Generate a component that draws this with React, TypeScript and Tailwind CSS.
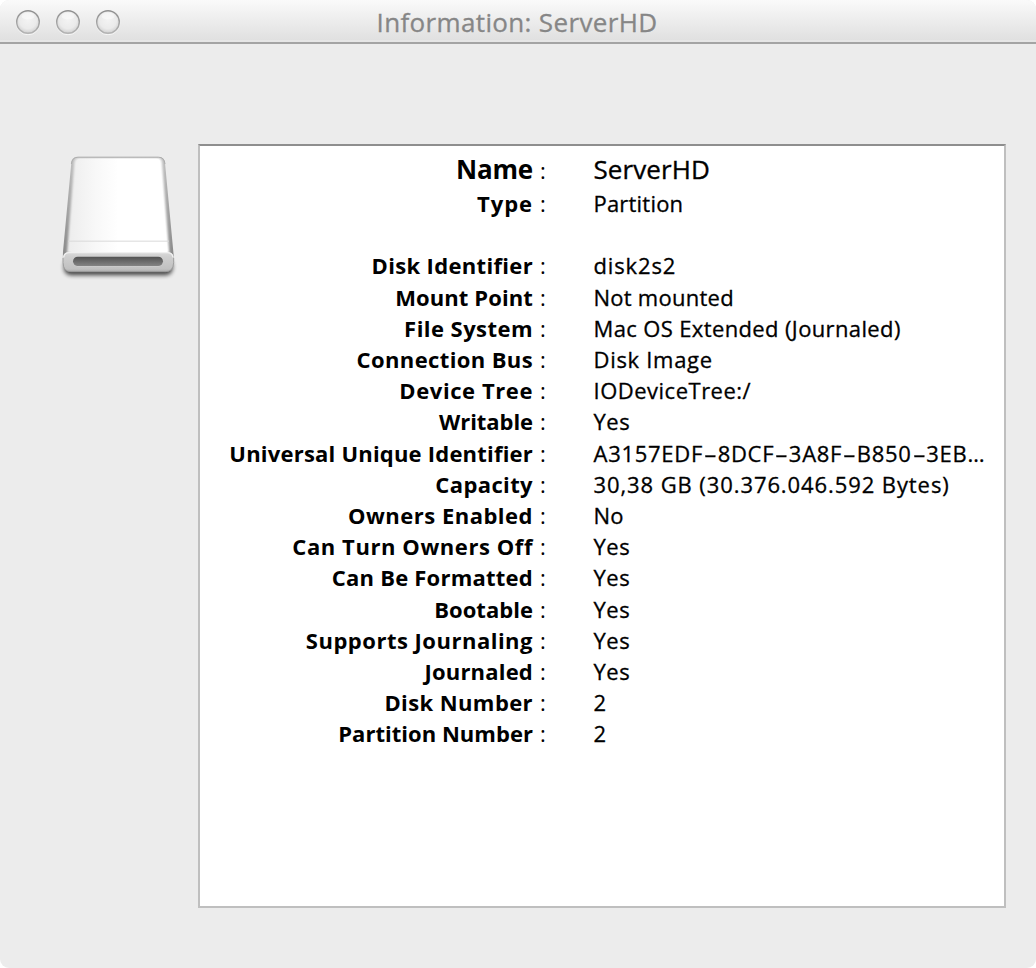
type Row = { label: string; value: string; labelCls: string; valueCls: string; h: string };

const rows: Row[] = [
  { label: "Type", value: "Partition", labelCls: "tracking-[0.94px]", valueCls: "tracking-[0.2px]", h: "h-[62px]" },
  { label: "Disk Identifier", value: "disk2s2", labelCls: "tracking-[0.33px]", valueCls: "tracking-[0.85px]", h: "h-8" },
  { label: "Mount Point", value: "Not mounted", labelCls: "tracking-[0.1px]", valueCls: "tracking-[0.25px]", h: "h-[31px]" },
  { label: "File System", value: "Mac OS Extended (Journaled)", labelCls: "tracking-[0.45px]", valueCls: "tracking-[0.37px]", h: "h-[31px]" },
  { label: "Connection Bus", value: "Disk Image", labelCls: "tracking-[0.38px]", valueCls: "tracking-[0.7px]", h: "h-[31px]" },
  { label: "Device Tree", value: "IODeviceTree:/", labelCls: "tracking-[0.58px]", valueCls: "tracking-[0.5px]", h: "h-[31px]" },
  { label: "Writable", value: "Yes", labelCls: "tracking-[-0.06px]", valueCls: "tracking-[0.5px]", h: "h-8" },
  { label: "Universal Unique Identifier", value: "A3157EDF-8DCF-3A8F-B850-3EB…", labelCls: "tracking-[0.21px]", valueCls: "tracking-[0.72px]", h: "h-[31px]" },
  { label: "Capacity", value: "30,38 GB (30.376.046.592 Bytes)", labelCls: "tracking-[0.38px]", valueCls: "tracking-[0.91px]", h: "h-[31px]" },
  { label: "Owners Enabled", value: "No", labelCls: "tracking-[0.5px]", valueCls: "tracking-[0.2px]", h: "h-[31px]" },
  { label: "Can Turn Owners Off", value: "Yes", labelCls: "tracking-[0.57px]", valueCls: "tracking-[0.5px]", h: "h-[31px]" },
  { label: "Can Be Formatted", value: "Yes", labelCls: "tracking-[0.23px]", valueCls: "tracking-[0.5px]", h: "h-8" },
  { label: "Bootable", value: "Yes", labelCls: "tracking-[0.03px]", valueCls: "tracking-[0.5px]", h: "h-[31px]" },
  { label: "Supports Journaling", value: "Yes", labelCls: "tracking-[0.5px]", valueCls: "tracking-[0.5px]", h: "h-[31px]" },
  { label: "Journaled", value: "Yes", labelCls: "tracking-[0.2px]", valueCls: "tracking-[0.5px]", h: "h-[31px]" },
  { label: "Disk Number", value: "2", labelCls: "tracking-[0.4px]", valueCls: "", h: "h-[31px]" },
  { label: "Partition Number", value: "2", labelCls: "tracking-[0.03px]", valueCls: "", h: "h-[31px]" },
];

/* Hyphens are drawn wide, in a cell of their own. */
function Value({ text }: { text: string }) {
  const parts = text.split("-");
  return (
    <>
      {parts.map((part, i) => (
        <span key={i}>
          {i > 0 && <span className="inline-block w-[14.6px] scale-x-[1.8] text-center tracking-normal">-</span>}
          {part}
        </span>
      ))}
    </>
  );
}

function WindowButton() {
  return (
    <svg className="size-[26px]" viewBox="0 0 26 26">
      <defs>
        <linearGradient id="btn-edge" x1="0" y1="0" x2="0" y2="1">
          <stop offset="0" stopColor="#909090" />
          <stop offset="1" stopColor="#b4b4b4" />
        </linearGradient>
        <radialGradient id="btn-fill" cx="0.5" cy="0.42" r="0.58">
          <stop offset="0" stopColor="#f3f3f3" />
          <stop offset="0.65" stopColor="#ebebeb" />
          <stop offset="1" stopColor="#cfcfcf" />
        </radialGradient>
      </defs>
      <circle cx="13" cy="14" r="11.8" fill="none" stroke="#f6f6f6" strokeWidth="1" />
      <circle cx="13" cy="13" r="11.3" fill="url(#btn-fill)" stroke="url(#btn-edge)" strokeWidth="1.4" />
      <ellipse cx="13" cy="7" rx="6.5" ry="3.6" fill="#fff" opacity="0.45" />
    </svg>
  );
}

function DriveIcon() {
  return (
    <svg className="h-[150px] w-[148px] shrink-0" viewBox="0 0 444 450">
      <defs>
        <linearGradient id="body" x1="40" y1="0" x2="370" y2="0" gradientUnits="userSpaceOnUse">
          <stop offset="0" stopColor="#ebebeb" />
          <stop offset="0.3" stopColor="#f8f8f8" />
          <stop offset="0.5" stopColor="#ffffff" />
          <stop offset="1" stopColor="#ffffff" />
        </linearGradient>
        <linearGradient id="side" x1="0" y1="50" x2="0" y2="345" gradientUnits="userSpaceOnUse">
          <stop offset="0" stopColor="#c0c0c0" />
          <stop offset="0.45" stopColor="#a8a8a8" />
          <stop offset="1" stopColor="#8a8a8a" />
        </linearGradient>
        <linearGradient id="front" x1="0" y1="335" x2="0" y2="396" gradientUnits="userSpaceOnUse">
          <stop offset="0" stopColor="#dcdcdc" />
          <stop offset="0.25" stopColor="#cfcfcf" />
          <stop offset="0.85" stopColor="#c1c1c1" />
          <stop offset="1" stopColor="#a8a8a8" />
        </linearGradient>
        <linearGradient id="slot" x1="0" y1="350" x2="0" y2="378" gradientUnits="userSpaceOnUse">
          <stop offset="0" stopColor="#515151" />
          <stop offset="1" stopColor="#848484" />
        </linearGradient>
        <filter id="shadow" x="-20%" y="-60%" width="140%" height="260%">
          <feGaussianBlur stdDeviation="6" />
        </filter>
        <filter id="soft" x="-5%" y="-5%" width="110%" height="110%">
          <feGaussianBlur stdDeviation="3" />
        </filter>
        <clipPath id="outline">
          <path d="M82 51H327Q343 51 345 68L371 345Q372 395 350 395H60Q38 395 38 345L64 68Q66 51 82 51Z" />
        </clipPath>
      </defs>
      <rect x="42" y="356" width="326" height="50" rx="22" fill="#000" opacity="0.7" filter="url(#shadow)" />
      <g clipPath="url(#outline)">
        <rect x="30" y="45" width="350" height="355" fill="url(#side)" />
        <path d="M86 54H324Q334 54 336 66L358 340H51L73 66Q75 54 86 54Z" fill="url(#body)" filter="url(#soft)" />
        <path d="M90 56H320Q329 56 330 66L352 338H62L80 66Q81 56 90 56Z" fill="url(#body)" />
        <path d="M54 303.5H357" stroke="#dadada" strokeWidth="3" />
      </g>
      <path d="M64 72Q66 51.500 84 51.500H325Q343 51.500 345 72" fill="none" stroke="#adadad" strokeWidth="3" />
      <path d="M39 352Q41 337 56 337H353Q369 337 371 352V368Q369 395 347 395H63Q40 395 39 368Z" fill="url(#front)" />
      <path d="M41 352Q43 338 57 338H352Q367 338 369 352" fill="none" stroke="#f0f0f0" strokeWidth="4" />
      <path d="M39 354V368Q40 395 63 395H347Q369 395 371 368V354" fill="none" stroke="#999999" strokeWidth="2.5" />
      <rect x="69" y="351" width="270" height="28" rx="14" fill="#e0e0e0" />
      <rect x="69" y="350" width="270" height="28" rx="14" fill="url(#slot)" />
    </svg>
  );
}

export default function App() {
  return (
    <div className="bg-white">
      <div className="flex h-[968px] w-[1036px] flex-col overflow-hidden rounded-[9px] bg-[#ececec] font-['Open_Sans','Noto_Sans',sans-serif] text-black">
        <header className="grid h-11 shrink-0 grid-cols-[1fr_auto_1fr] border-b-2 border-[#a4a4a4] bg-linear-to-b from-[#fafafa] to-[#dfdfdf] shadow-[inset_0_-2px_0_#e6e6e6]">
          <div className="flex gap-3.5 pt-[9px] pl-[15px]">
            <WindowButton />
            <WindowButton />
            <WindowButton />
          </div>
          <h1 className="pt-[5px] pr-0.5 text-[26px] leading-[34px] tracking-[0.35px] whitespace-nowrap text-[#868686] [-webkit-text-stroke:0.3px_#868686]">
            Information: ServerHD
          </h1>
        </header>
        <main className="flex min-h-0 flex-1 pt-[100px] pr-[30px] pb-[60px] pl-[50px]">
          <div className="-mt-1 shrink-0">
            <DriveIcon />
          </div>
          <section className="min-w-0 flex-1 border-2 border-[#bfbfbf] border-t-[#8e8e8e] bg-white pt-1.5 text-[22px] leading-[31px] whitespace-nowrap">
            <div className="flex h-9 items-baseline leading-[34px]">
              <span className="w-[333px] text-right text-[26px] font-bold tracking-[-0.2px]">Name</span>
              <span className="w-[60.5px] pl-[7px]">:</span>
              <span className="text-[26px] tracking-[0.1px] [-webkit-text-stroke:0.35px_black]">ServerHD</span>
            </div>
            {rows.map((row) => (
              <div key={row.label} className={`flex items-baseline ${row.h}`}>
                <span className={`w-[333px] text-right font-bold ${row.labelCls}`}>{row.label}</span>
                <span className="w-[60.5px] pl-[7px]">:</span>
                <span className={`[-webkit-text-stroke:0.3px_black] ${row.valueCls}`}>
                  <Value text={row.value} />
                </span>
              </div>
            ))}
          </section>
        </main>
      </div>
    </div>
  );
}
